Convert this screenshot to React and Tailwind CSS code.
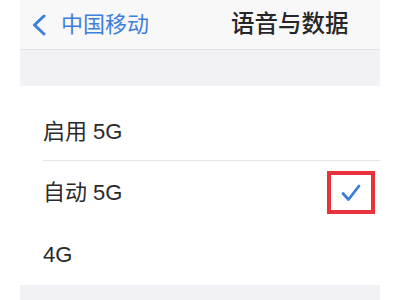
import React from 'react';

const font = { fontFamily: '"Liberation Sans", "Noto Sans CJK SC", sans-serif' };

const Row = ({ label, height, checked, divider }) => (
    <div className={`flex items-center pl-[23px] ${height}`}>
        <div className={`flex h-full flex-1 items-center justify-between pr-[5px] ${divider ? 'border-b border-[#e6e6e8]' : ''}`}>
            <span className="text-[22px] text-[#2a2a2c]">{label}</span>
            {checked && (
                <div className="flex h-[43px] w-[48px] items-center justify-center border-[4px] border-[#e8323c]">
                    <svg viewBox="0 0 24 24" className="h-[24px] w-[24px] text-[#3b7ddd]" fill="none" stroke="currentColor" strokeWidth="2.8" strokeLinecap="round" strokeLinejoin="round">
                        <path d="M4 12.5l5.5 6L20 5" />
                    </svg>
                </div>
            )}
        </div>
    </div>
);

export default function App() {
    return (
        <div className="h-[300px] w-[400px] overflow-hidden bg-white" style={font}>
            <div className="mx-[20px] w-[360px]">
                {/* Navigation bar */}
                <div className="flex h-[50px] items-center border-b border-[#e4e4e6] bg-[#f8f8f9]">
                    <div className="flex items-center pl-[12px] text-[#3f7fdc]">
                        <svg viewBox="0 0 14 22" className="h-[22px] w-[14px]" fill="none" stroke="currentColor" strokeWidth="3" strokeLinecap="round" strokeLinejoin="round">
                            <path d="M12 2L2.5 11l9.5 9" />
                        </svg>
                        <span className="ml-[15px] text-[22px] leading-none">中国移动</span>
                    </div>
                    <span className="ml-[82px] text-[23.5px] font-medium leading-none text-[#262628]">语音与数据</span>
                </div>

                {/* Grouped header gap */}
                <div className="h-[36px] bg-[#f2f2f6]"></div>

                {/* Options */}
                <div className="bg-white pt-[17px]">
                    <Row label="启用 5G" height="h-[58px]" divider />
                    <Row label="自动 5G" height="h-[63px]" checked />
                    <Row label="4G" height="h-[61px]" />
                </div>

                <div className="h-[20px] bg-[#f2f2f6]"></div>
            </div>
        </div>
    );
}
